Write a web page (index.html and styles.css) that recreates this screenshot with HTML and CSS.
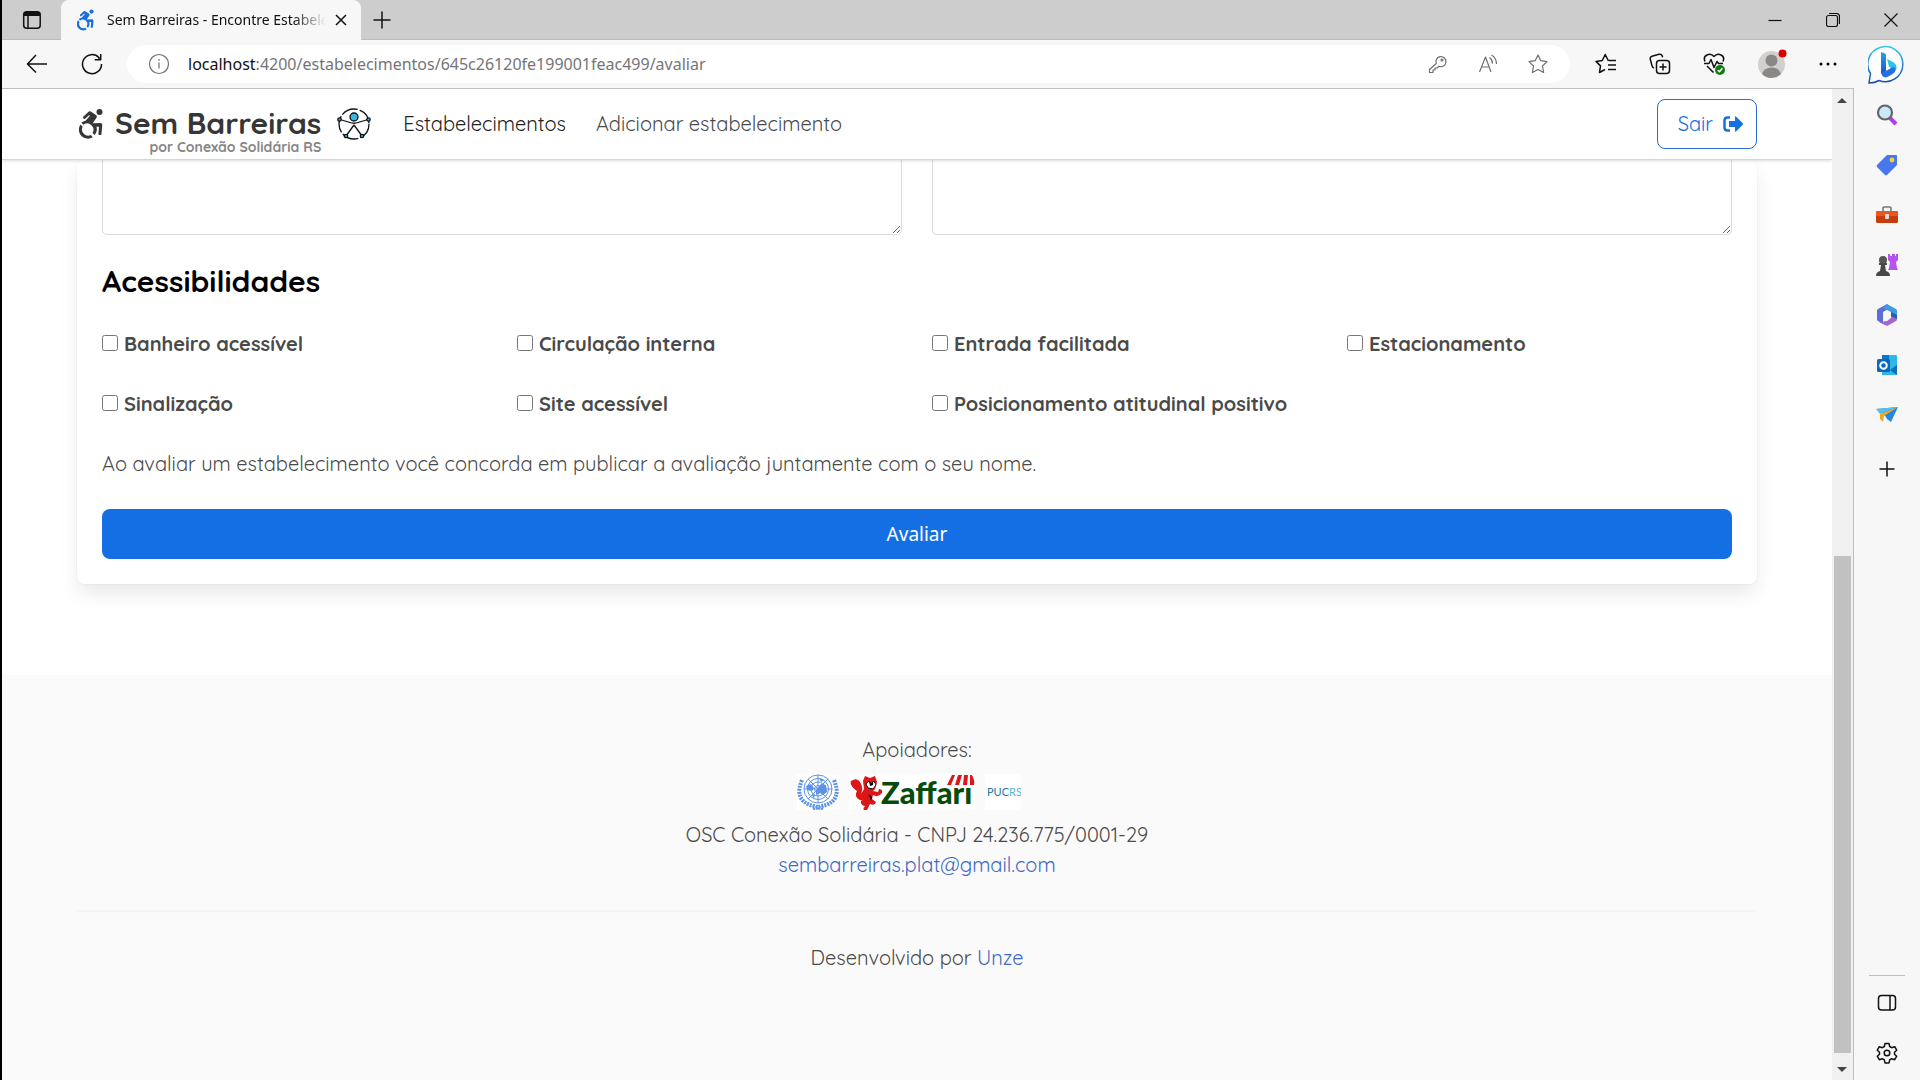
FILE: index.html
```
<!DOCTYPE html>
<html lang="pt-BR">
<head>
<meta charset="utf-8">
<title>Sem Barreiras - Encontre Estabelecimentos</title>
<link rel="stylesheet" href="styles.css">
</head>
<body>
<svg class="defs" aria-hidden="true">
  <symbol id="wheelchair" viewBox="0 0 24 30">
    <circle cx="20.5" cy="3" r="3"/>
    <path d="M4 8 9.500 2.800Q10.500 2 11.700 2.600L17 6Q18.600 7 17.500 8.700L13.700 14.300 21.200 14Q23.400 14 23.300 16L22.400 25.500Q20.800 26.600 19.400 25.500L20 17.700 17.500 17.800A9 9 0 0 1 15.700 26L13.500 24A6.200 6.200 0 0 0 4.500 15.800L2.300 13.600A9 9 0 0 1 6.500 11.700L11 6.800 10 6.200 6 9.800Q4 10.500 4 8Z"/>
    <path d="M1.500 15.500 3.600 17.700A6.200 6.200 0 0 0 11.800 26L13.800 28.200A9 9 0 0 1 1.500 15.500Z"/>
  </symbol>
</svg>
<div class="browser">
  <div class="titlebar">
    <button class="icon-btn tab-actions" aria-label="Guias"><svg width="20" height="20" viewBox="0 0 20 20" class="line"><rect x="1.700" y="1.700" width="16.500" height="16.500" rx="3"/><path d="M2 4h16" stroke-width="4"/><path d="M6 6v12"/></svg></button>
    <div class="tab">
      <svg class="favicon" width="17" height="22"><use href="#wheelchair"/></svg>
      <span class="tab-title">Sem Barreiras - Encontre Estabelecimentos</span>
      <button class="icon-btn" aria-label="Fechar guia"><svg width="12" height="12" viewBox="0 0 12 12" class="line"><path d="m1 1 10 10M11 1 1 11"/></svg></button>
    </div>
    <button class="icon-btn new-tab" aria-label="Nova guia"><svg width="18" height="18" viewBox="0 0 18 18" class="line"><path d="M9 .5v17M.5 9h17"/></svg></button>
    <div class="window-controls">
      <button class="icon-btn" aria-label="Minimizar"><svg width="14" height="14" viewBox="0 0 14 14" class="line thin"><path d="M.5 7.500h13"/></svg></button>
      <button class="icon-btn" aria-label="Restaurar"><svg width="14" height="14" viewBox="0 0 14 14" class="line thin"><rect x=".5" y="2.500" width="11" height="11" rx="2"/><path d="M3 .5h7.500a3 3 0 0 1 3 3V11"/></svg></button>
      <button class="icon-btn" aria-label="Fechar"><svg width="14" height="14" viewBox="0 0 14 14" class="line thin"><path d="m.5.5 13 13m0-13-13 13"/></svg></button>
    </div>
  </div>
  <div class="toolbar">
    <button class="icon-btn nav-btn" aria-label="Voltar"><svg width="22" height="20" viewBox="0 0 22 20" class="line"><path d="M21 10H1.500M10 1 1.500 10 10 18.500"/></svg></button>
    <button class="icon-btn nav-btn" aria-label="Atualizar"><svg width="22" height="22" viewBox="0 0 22 22" class="line"><path d="M20.500 11A9.500 9.500 0 1 1 18 4.700V6M19.700 1v5.700h-6"/></svg></button>
    <div class="address">
      <svg width="22" height="22" viewBox="0 0 22 22" class="line thin gray"><circle cx="11" cy="11" r="9.500"/><path d="M11 9.500v6M11 6v1.700"/></svg>
      <div class="url"><span>localhost</span>:4200/estabelecimentos/645c26120fe199001feac499/avaliar</div>
      <div class="address-icons">
        <button class="icon-btn" aria-label="Senha"><svg width="20" height="20" viewBox="0 0 20 20" class="line thin gray"><path d="M8.300 9.500A5 5 0 1 1 11 12.200L9 14H7v2H5v2.500H1.500v-3z"/><circle cx="14" cy="6" r="1"/></svg></button>
        <button class="icon-btn" aria-label="Ler em voz alta"><svg width="20" height="20" viewBox="0 0 20 20" class="line thin gray"><path d="M1.500 18 7.500 3 13 18M3.500 13h7.500M11.500 3.500q3 2 3 6M13.500 1q5 3 5 9"/></svg></button>
        <button class="icon-btn" aria-label="Adicionar aos favoritos"><svg width="20" height="20" viewBox="0 0 20 20" class="line thin gray"><path d="m10 1 2.800 5.700 6.200.9-4.500 4.400L15.600 18.500 10 15.500 4.400 18.500 5.500 12 1 7.600l6.200-.9z"/></svg></button>
      </div>
    </div>
    <div class="tools">
      <button class="icon-btn" aria-label="Favoritos"><svg width="22" height="22" viewBox="0 0 22 22" class="line"><path d="M13.500 8 10.200 1.500 7.300 7.500 1 8.400l4.500 4.500L4.500 19.500l5.500-3M14 7.500h7M13 12h8M13 16.500h8"/></svg></button>
      <button class="icon-btn" aria-label="Coleções"><svg width="22" height="22" viewBox="0 0 22 22" class="line"><rect x="7.500" y="7.500" width="13" height="13" rx="3"/><path d="M14 10.500v7M10.500 14h7M5 15Q3.500 14.500 3 12.700L1.300 6.300Q.8 4 3 3.300l7-2q2.500-.6 3.300 1.700l.3 1.300"/></svg></button>
      <button class="icon-btn" aria-label="Desempenho"><svg width="22" height="22" viewBox="0 0 22 22" class="line"><path d="M2 8.500Q0 4 4 2q4-2 7 1.500Q14 0 18 2q4 2 2 6.500M1 10.500h5l2-4 3 8 3-6 1.500 2H20M4 13l6.500 6.500"/><circle cx="17" cy="17" r="5" class="ok"/><path d="m14.700 17 1.700 1.700 3-3.500" class="white"/></svg></button>
      <button class="icon-btn" aria-label="Perfil"><svg width="30" height="30" viewBox="0 0 30 30"><circle cx="14.500" cy="15.500" r="13.500" fill="#d2d0ce"/><circle cx="14.500" cy="11.500" r="6" fill="#8a8886"/><path d="M5 25q2-6.500 9.500-6.500T24 25q-4 4-9.500 4T5 25" fill="#8a8886"/><circle cx="25.500" cy="4.500" r="4" fill="#d80000"/></svg></button>
      <button class="icon-btn" aria-label="Mais opções"><svg width="18" height="4" viewBox="0 0 18 4"><circle cx="2" cy="2" r="1.500"/><circle cx="9" cy="2" r="1.500"/><circle cx="16" cy="2" r="1.500"/></svg></button>
    </div>
  </div>
  <div class="site">
    <header class="site-header">
      <div class="container header-row">
        <a class="brand" href="#">
          <svg class="brand-icon" width="24" height="30"><use href="#wheelchair"/></svg>
          <span class="brand-text"><span class="brand-name">Sem Barreiras</span><small>por Conexão Solidária RS</small></span>
          <svg width="34" height="32" viewBox="0 0 34 32" class="access"><circle cx="17" cy="16" r="15" stroke-dasharray="17 2"/><path d="M3 11.500 13 14.500Q17 16 21 14.500L31 11.500M17 17 9 28M17 17l8 11"/><circle cx="17" cy="9" r="4" class="dot"/><circle cx="2.500" cy="11.500" r="1.700" class="dot"/><circle cx="31.500" cy="11.500" r="1.700" class="dot"/><circle cx="9" cy="28" r="1.700" class="dot"/><circle cx="25" cy="28" r="1.700" class="dot"/></svg>
        </a>
        <nav class="menu"><a href="#" class="active">Estabelecimentos</a><a href="#">Adicionar estabelecimento</a></nav>
        <button class="logout">Sair <svg width="20" height="16" viewBox="0 0 20 16"><path d="M7 1.500H4.500q-3 0-3 3v7q0 3 3 3H7" fill="none" stroke="currentColor" stroke-width="2.500"/><path d="M6 5h6V1q0-1 1-.5l6.500 6.500q1 1 0 2L13 15.500q-1 .5-1-.5v-4H6z" fill="currentColor"/></svg></button>
      </div>
    </header>
    <main class="content">
      <form class="container card">
        <div class="fields"><textarea aria-label="Pontos positivos"></textarea><textarea aria-label="Pontos negativos"></textarea></div>
        <h2>Acessibilidades</h2>
        <div class="checks">
          <label><input type="checkbox">Banheiro acessível</label>
          <label><input type="checkbox">Circulação interna</label>
          <label><input type="checkbox">Entrada facilitada</label>
          <label><input type="checkbox">Estacionamento</label>
          <label><input type="checkbox">Sinalização</label>
          <label><input type="checkbox">Site acessível</label>
          <label><input type="checkbox">Posicionamento atitudinal positivo</label>
        </div>
        <p>Ao avaliar um estabelecimento você concorda em publicar a avaliação juntamente com o seu nome.</p>
        <button type="button" class="submit">Avaliar</button>
      </form>
    </main>
    <footer class="site-footer">
      <div class="container">
        <div>Apoiadores:</div>
        <div class="sponsors">
          <svg width="42" height="36" viewBox="0 0 42 36" class="un" aria-label="ONU"><rect width="42" height="36" fill="#fff" stroke="none"/><circle cx="21" cy="15" r="14"/><circle cx="21" cy="15" r="10.500"/><circle cx="21" cy="15" r="7"/><circle cx="21" cy="15" r="3.500"/><path d="M21 1v28M7 15h28M11 5l20 20M31 5 11 25"/><path class="land" d="M9 12l5-2 3 4-2 3-5-1zM19 16l5-6 5 1 1 7-4 3-3-2-4 2zM22 4l5 2-3 2zM15 21l3-1-1 5z"/><path class="laurel" d="M5 6Q-3 25 13 31q5 1 13 4M37 6q8 19-8 25-5 1-13 4"/></svg>
          <svg width="126" height="36" viewBox="0 0 126 36" aria-label="Zaffari" class="zaffari">
            <rect width="126" height="36" fill="#fff"/>
            <path class="red" d="M14 27Q4 24 8 17 0 11 2 7q6-4 9 1 4 6 1 12l3-5-1-8 2-5 5 2 5-2 2 6-2 7-2 2 5 1 1-3q4 0 3 4-4 5-9 2l-1 4 4 3q-1 4-6 2l-3 6q-6 1-2-4-5-1-4-5z"/>
            <path class="face" d="m17 10 3-3 2 3 3-3 2 4-3 4-5-1z"/><path d="m20 7 2 3 2-2v3l-3 1zM19 20l4 3-1 4-1-4z"/>
            <text x="32" y="30">Zaffari</text>
            <path fill="#fff" d="M99 0h27v13H98z"/>
            <path class="red" d="m103 1-5 10h4l4-10zm6 0-3 10h4l3-10zm6 0-1 10h4l1-10zm6 0v10h4q1-4-2-10z"/>
          </svg>
          <svg width="36" height="36" viewBox="0 0 36 36" aria-label="PUCRS"><rect width="36" height="36" fill="#fff"/><text x="2" y="22" class="pucrs">PUC<tspan>RS</tspan></text></svg>
        </div>
        <div>OSC Conexão Solidária - CNPJ 24.236.775/0001-29</div>
        <div><a href="#">sembarreiras.plat@gmail.com</a></div>
        <hr>
        <div>Desenvolvido por <a href="#">Unze</a></div>
      </div>
    </footer>
  </div>
  <div class="scrollbar"><i class="arrow up"></i><i class="thumb"></i><i class="arrow down"></i></div>
  <aside class="sidebar">
    <button class="icon-btn bing" aria-label="Bing"><svg width="38" height="40" viewBox="0 0 38 40"><defs><linearGradient id="g1" x2="0" y2="1"><stop stop-color="#35c7ee"/><stop offset="1" stop-color="#184da7"/></linearGradient><linearGradient id="g2" x2="0" y2="1"><stop stop-color="#2f9af0"/><stop offset="1" stop-color="#1554c8"/></linearGradient></defs><path d="M1 38 2.500 28.500A17.500 17.500 0 1 1 11 35.500Q7 38 1 38Z" fill="#fff" stroke="url(#g1)" stroke-width="1.500"/><path d="m13 7 4 1.500q1 .5 1 1.500v16l-3 4q-2-.5-2-3z" fill="url(#g2)"/><path d="m19 14 6 3q5 3 3 8l-5-2-2-1z" fill="#2cc4e6"/><path d="M13 27q0 2 3 0l8-4.500q4-1 3.500 3-.5 2-3 3.500l-5 3Q14 34 13 27" fill="#2272e4"/></svg></button>
    <button class="icon-btn" aria-label="Pesquisar"><svg width="22" height="22" viewBox="0 0 22 22"><path d="m14 14 6 6" stroke="#b43bea" stroke-width="4"/><circle cx="9" cy="8.500" r="7" fill="#c9e8fa" stroke="#656565" stroke-width="2.200"/></svg></button>
    <button class="icon-btn" aria-label="Compras"><svg width="22" height="22" viewBox="0 0 22 22"><path d="M11 1h9q1 0 1 1v9L11 21q-1 .8-2 0L1 13q-.8-1 0-2z" fill="#4a77ee"/><circle cx="16" cy="6" r="2.400" fill="#f3cf3a"/></svg></button>
    <button class="icon-btn" aria-label="Ferramentas"><svg width="24" height="20" viewBox="0 0 24 20"><path d="M8 6V3q0-1 1-1h6q1 0 1 1v3" fill="none" stroke="#777" stroke-width="1.600"/><rect x="1" y="6" width="22" height="12" rx="1.500" fill="#c83c0b"/><path d="M1 7.500Q1 6 2.500 6h19Q23 6 23 7.500V11H1z" fill="#e8571c"/><rect x="10" y="9" width="4" height="5" rx="1" fill="#ddd"/></svg></button>
    <button class="icon-btn" aria-label="Jogos"><svg width="24" height="24" viewBox="0 0 24 24"><path d="M13 1h2v2h2V1h3v2h1V1h2v6l-2 2 1 6 1 2H13l1-2 1-6-2-2z" fill="#b553ef"/><circle cx="8" cy="7" r="4" fill="#555"/><path d="M4 10h8v2h-2l1 6q4 1 4 5H1q0-4 4-5l1-6H4z" fill="#484848"/></svg></button>
    <button class="icon-btn" aria-label="Microsoft 365"><svg width="22" height="24" viewBox="0 0 22 24"><path d="M11 1 2 6q-1 .5-1 2v8q0 1.500 1 2l5 3V9l7-4z" fill="#5a6fd6"/><path d="m11 1 9 5q1 .5 1 2v8l-6-4V9l-8-4z" fill="#3c9cdf"/><path d="M21 12v4q0 1.500-1 2l-8 4.500q-1 .5-2 0L3 19l8-1 4-3v-5z" fill="#a267cf"/><path d="m15 9 6 3v4l-6-3z" fill="#2b5fae"/><circle cx="11" cy="12" r="4" fill="#f7f7f7"/></svg></button>
    <button class="icon-btn" aria-label="Outlook"><svg width="22" height="22" viewBox="0 0 22 22"><path d="M6 1h14q1 0 1 1v18q0 1-1 1H6z" fill="#30b5e8"/><path d="M6 1h7v9H6z" fill="#0878cc"/><path d="m21 11-7 5 7 5z" fill="#106cb7"/><rect x="1" y="5" width="13" height="13" rx="1.500" fill="#0869bd"/><circle cx="7.500" cy="11.500" r="3.300" fill="none" stroke="#fff" stroke-width="2"/></svg></button>
    <button class="icon-btn" aria-label="Drop"><svg width="24" height="20" viewBox="0 0 24 20"><path d="M1 4 23 2l-7 15-4-3-3-5z" fill="#2389df"/><path d="M1 4 23 2 5 9z" fill="#57bdea"/><path d="M5 9 23 2 9 11l-1 6-3-3z" fill="#e8a82c"/></svg></button>
    <button class="icon-btn add" aria-label="Adicionar"><svg width="16" height="16" viewBox="0 0 16 16" class="line"><path d="M8 .5v15M.5 8h15"/></svg></button>
    <div class="sidebar-bottom">
      <button class="icon-btn" aria-label="Barra lateral"><svg width="20" height="18" viewBox="0 0 20 18" class="line"><rect x="1.500" y="1.500" width="17" height="14.500" rx="3"/><path d="M13 2v14"/></svg></button>
      <button class="icon-btn" aria-label="Configurações"><svg width="22" height="22" viewBox="0 0 22 22" class="line"><path d="M9 1.500h4l.7 3 2 1.200 3-1 2 3.500-2.200 2v2l2.200 2-2 3.500-3-1-2 1.200-.7 3H9l-.7-3-2-1.200-3 1-2-3.500 2.200-2v-2l-2.200-2 2-3.500 3 1 2-1.200z"/><circle cx="11" cy="11" r="2.800"/></svg></button>
    </div>
  </aside>
</div>
</body>
</html>
```
FILE: styles.css
```
* { box-sizing: border-box; }
body { margin: 0; background: #fff; color: #4a4a4a; font: 400 20px/30px Quicksand, Inter, sans-serif; }
a { color: #3e69c4; text-decoration: none; }
button { font: inherit; cursor: pointer; }
.defs { position: absolute; width: 0; height: 0; }
.icon-btn { display: flex; align-items: center; justify-content: center; padding: 0; border: 0; background: none; color: #000; }
.line { fill: none; stroke: #111; stroke-width: 1.5; stroke-linejoin: round; }
.thin { stroke-width: 1.2; }
.gray { stroke: #707070; }
.ok { fill: #107c10; stroke: none; }
.white { stroke: #fff; }

.browser { display: grid; grid-template: 40px 49px minmax(0, 1fr) / minmax(0, 1fr) 22px 66px; height: 100vh; border-left: 2px solid #000; overflow: hidden; }
.titlebar { grid-column: 1 / 4; display: flex; align-items: center; background: #cdcdcd; border-bottom: 1px solid #bcbcbc; font: 400 14px/20px "Noto Sans", sans-serif; color: #111; }
.tab-actions { width: 59px; }
.tab { display: flex; align-items: center; width: 300px; height: 40px; margin-bottom: -1px; padding: 0 14px 0 16px; background: #f7f7f7; border-radius: 8px 8px 0 0; }
.favicon { fill: #1a6fe0; margin-right: 13px; flex: none; }
.tab-title { flex: 1; overflow: hidden; white-space: nowrap; margin-right: 9px; mask-image: linear-gradient(90deg, #000 85%, transparent); }
.new-tab { width: 42px; }
.window-controls { display: flex; margin-left: auto; }
.window-controls .icon-btn { width: 58px; height: 39px; }

.toolbar { grid-column: 1 / 3; display: flex; align-items: center; background: #f7f7f7; border-bottom: 1px solid #bdbdbd; }
.nav-btn { width: 55px; }
.nav-btn:first-child { margin-left: 7px; }
.address { flex: 1; display: flex; align-items: center; height: 38px; margin-left: 8px; padding: 0 22px 0 21px; border-radius: 19px; background: #fff; }
.url { margin-left: 18px; font: 400 16px/24px "Noto Sans", sans-serif; color: #757575; }
.url span { color: #111; }
.address-icons { display: flex; gap: 30px; margin-left: auto; }
.tools { display: flex; gap: 32px; padding: 0 17px 0 25px; }

.site { overflow: hidden; display: flex; flex-direction: column; }
.container { width: calc(100% - 150px); margin: 0 auto; }
.site-header { position: relative; z-index: 1; flex: none; height: 71px; border-bottom: 1px solid #d5d5d5; box-shadow: 0 1px 3px #0002; background: #fff; }
.header-row { display: flex; align-items: center; height: 70px; }
.brand { display: flex; align-items: center; padding-left: 2px; color: #363636; }
.brand-icon { fill: #363636; margin-right: 12px; }
.brand-text { display: flex; flex-direction: column; align-items: flex-end; padding-top: 12px; }
.brand-name { font-size: 30px; font-weight: 700; line-height: 34px; }
.brand small { font-size: 14px; font-weight: 700; line-height: 14px; color: #858585; }
.access { margin-left: 16px; fill: none; stroke: #111; stroke-width: 1.3; }
.dot { fill: #35b8e8; }
.menu { display: flex; gap: 30px; margin-left: 32px; }
.menu a { color: #4a4a4a; }
.menu .active { color: #222; }
.logout { display: flex; align-items: center; gap: 10px; height: 50px; margin-left: auto; padding: 0 13px 0 20px; border: 1px solid #2b6fce; border-radius: 8px; background: #fff; color: #176fe4; }

.content { flex: none; padding-bottom: 91px; }
.card { padding: 0 25px 25px; border-radius: 8px; background: #fff; box-shadow: 0 10px 20px -2px #0a0a0a1a, 0 0 0 1px #0a0a0a05; }
.fields { display: grid; grid-template-columns: 1fr 1fr; gap: 30px; }
.fields textarea { height: 150px; margin-top: -75px; border: 1px solid #dbdbdb; border-radius: 5px; background: #fff; }
.card h2 { margin: 28px 0 30px; color: #000; font-size: 30px; font-weight: 700; line-height: 36px; }
.checks { display: grid; grid-template-columns: repeat(4, 1fr); gap: 30px; white-space: nowrap; }
.checks label { display: flex; align-items: center; font-weight: 700; }
.checks input { width: 16px; height: 16px; margin: 0 6px 2px 0; }
.card p { margin: 30px 0; }
.submit { width: 100%; height: 50px; border: 0; border-radius: 8px; background: #156fe4; color: #fff; font: 400 19px/30px "Noto Sans", sans-serif; }

.site-footer { flex: 1 0 auto; padding: 60px 0 100px; background: #fafafa; text-align: center; }
.sponsors { display: flex; justify-content: center; gap: 10px; height: 55px; padding: 9px 16px 0 0; }
.un { fill: none; stroke: #5b92e5; }
.un .land { fill: #5b92e5; stroke: none; }
.un .laurel { stroke-width: 4; stroke-dasharray: 2 1; }
.zaffari text { font: 900 31px Lato, sans-serif; fill: #064b08; }
.red { fill: #dc1717; }
.face { fill: #fff; stroke: #111; }
.pucrs { font: 400 11px Lato, sans-serif; fill: #2378a8; }
.pucrs tspan { fill: #55b6d5; }
.site-footer hr { height: 2px; margin: 30px 0 31px; border: 0; background: #f5f5f5; }

.scrollbar { display: flex; flex-direction: column; align-items: center; justify-content: space-between; padding: 9px 2px 8px 1px; background: #f0f0f0; border-right: 1px solid #bdbdbd; }
.arrow { border: 5px solid transparent; }
.up { border-top: 0; border-bottom-color: #444; }
.down { border-bottom: 0; border-top-color: #444; }
.thumb { width: 17px; height: 51%; margin: auto 0 14px; background: #c1c1c1; }
.sidebar { grid-column: 3; grid-row: 2 / 4; display: flex; flex-direction: column; align-items: center; background: #f7f7f7; }
.sidebar .icon-btn { height: 50px; flex: none; }
.sidebar .add { height: 58px; }
.sidebar-bottom { margin-top: auto; padding: 2px 0; border-top: 1px solid #bdbdbd; width: 36px; display: flex; flex-direction: column; align-items: center; }
```
